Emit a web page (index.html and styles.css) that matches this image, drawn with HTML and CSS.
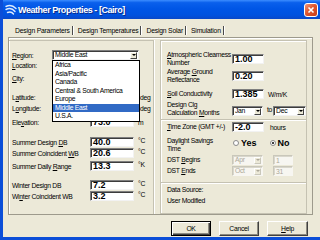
FILE: index.html
```html
<!DOCTYPE html>
<html lang="en">
<head>
<meta charset="utf-8">
<title>Weather Properties - [Cairo]</title>
<link rel="stylesheet" href="styles.css">
</head>
<body>
<div class="window">
  <div class="titlebar">
    <svg class="app-icon" viewBox="0 0 12 11" aria-hidden="true">
      <path d="M1 2.5 C4 1 8 1.5 11 4.5"/>
      <path d="M1 5.5 C4 4 7.5 4.5 10 7.5"/>
      <path d="M2.5 8.5 C5 7.5 7 8 8.5 10"/>
    </svg>
    <span class="title">Weather Properties - [Cairo]</span>
    <span class="close"><svg viewBox="0 0 8 8" aria-hidden="true"><path d="M1.5 1.5 L6.5 6.5 M6.5 1.5 L1.5 6.5"/></svg></span>
  </div>
  <div class="client">
    <div class="tabs">
      <span class="tab">Design Parameters</span>
      <span class="tab">Design Temperatures</span>
      <span class="tab">Design Solar</span>
      <span class="tab">Simulation</span>
    </div>
    <div class="panel">
      <div class="leftcol">
        <div class="row">
          <span class="lbl lbl-short"><u>R</u>egion:</span>
          <div class="combo combo-region">
            <span class="combo-text">Middle East</span>
            <span class="drop"><span class="tri"></span></span>
            <ul class="droplist">
              <li>Africa</li>
              <li>Asia/Pacific</li>
              <li>Canada</li>
              <li>Central &amp; South America</li>
              <li>Europe</li>
              <li class="sel">Middle East</li>
              <li>U.S.A.</li>
            </ul>
          </div>
        </div>
        <div class="row">
          <span class="lbl lbl-short"><u>L</u>ocation:</span>
          <div class="field field-wide"></div>
        </div>
        <div class="row sp3">
          <span class="lbl lbl-short"><u>C</u>ity:</span>
          <div class="field field-wide"></div>
        </div>
        <div class="row sp9">
          <span class="lbl">L<u>a</u>titude:</span>
          <div class="field"></div>
          <span class="unit unit-deg">deg</span>
        </div>
        <div class="row sp1">
          <span class="lbl">L<u>o</u>ngitude:</span>
          <div class="field"></div>
          <span class="unit unit-deg">deg</span>
        </div>
        <div class="row sp4">
          <span class="lbl">Ele<u>v</u>ation:</span>
          <div class="field">73.0</div>
          <span class="unit">m</span>
        </div>
        <div class="row sp10">
          <span class="lbl">Summer Design <u>D</u>B</span>
          <div class="field">40.0</div>
          <span class="unit unit-top">°C</span>
        </div>
        <div class="row sp1">
          <span class="lbl">Summer Coincident <u>W</u>B</span>
          <div class="field">20.6</div>
          <span class="unit unit-top">°C</span>
        </div>
        <div class="row sp3">
          <span class="lbl">Summer Daily <u>R</u>ange</span>
          <div class="field">13.3</div>
          <span class="unit unit-top">°K</span>
        </div>
        <div class="row sp9">
          <span class="lbl">Winter Design DB</span>
          <div class="field">7.2</div>
          <span class="unit unit-top">°C</span>
        </div>
        <div class="row sp1">
          <span class="lbl">Wi<u>n</u>ter Coincident WB</span>
          <div class="field">3.2</div>
          <span class="unit unit-top">°C</span>
        </div>
      </div>
      <div class="rightcol">
        <div class="group group-a">
          <div class="rrow rrow-tall">
            <span class="rlbl"><u>A</u>tmospheric Clearness<br>Number</span>
            <div class="field rfield">1.00</div>
          </div>
          <div class="rrow rrow-tall sp1">
            <span class="rlbl">Average <u>G</u>round<br>Reflectance</span>
            <div class="field rfield">0.20</div>
          </div>
          <div class="rrow sp5">
            <span class="rlbl"><u>S</u>oil Conductivity</span>
            <div class="field rfield">1.385</div>
            <span class="unit">W/m/K</span>
          </div>
          <div class="rrow rrow-tall sp2">
            <span class="rlbl">Design Clg<br>Calculation <u>M</u>onths</span>
            <div class="combo combo-small combo-push">
              <span class="combo-text">Jan</span>
              <span class="drop"><span class="tri"></span></span>
            </div>
            <span class="unit unit-to">to</span>
            <div class="combo combo-small combo-dec">
              <span class="combo-text">Dec</span>
              <span class="drop"><span class="tri"></span></span>
            </div>
          </div>
        </div>
        <div class="group group-b">
          <div class="rrow">
            <span class="rlbl"><u>T</u>ime Zone (GMT +/-)</span>
            <div class="field rfield">-2.0</div>
            <span class="unit unit-hours">hours</span>
          </div>
          <div class="rrow rrow-tall rrow-top sp5">
            <span class="rlbl">Daylight Savings<br>Time</span>
            <label class="radio"><span class="dot"></span>Yes</label>
            <label class="radio radio-no"><span class="dot on"></span>No</label>
          </div>
          <div class="rrow sp2">
            <span class="rlbl">DST <u>B</u>egins</span>
            <div class="combo combo-small combo-off">
              <span class="combo-text">Apr</span>
              <span class="drop"><span class="tri"></span></span>
            </div>
            <div class="field field-off">1</div>
          </div>
          <div class="rrow sp1">
            <span class="rlbl">DST <u>E</u>nds</span>
            <div class="combo combo-small combo-off">
              <span class="combo-text">Oct</span>
              <span class="drop"><span class="tri"></span></span>
            </div>
            <div class="field field-off">31</div>
          </div>
        </div>
        <div class="group group-c">
          <div class="src">Data Source:</div>
          <div class="src">User Modified</div>
        </div>
      </div>
    </div>
    <div class="buttons">
      <button class="btn btn-default" type="button">OK</button>
      <button class="btn" type="button">Cancel</button>
      <button class="btn btn-help" type="button"><u>H</u>elp</button>
    </div>
  </div>
</div>
</body>
</html>
```

FILE: styles.css
```css
* { box-sizing: border-box; }
html, body { margin: 0; padding: 0; }
body {
  width: 320px;
  height: 240px;
  overflow: hidden;
  background: #ECE9D8;
  color: #000;
  font-family: "Liberation Sans", Arial, sans-serif;
  font-size: 6.8px;
  letter-spacing: -0.3px;
}
.window {
  width: 320px;
  height: 240px;
  display: flex;
  flex-direction: column;
  background: #ECE9D8;
  border-left: 3px solid #0B4ED8;
  border-bottom: 3px solid #0B4ED8;
}
.titlebar {
  flex: none;
  height: 19px;
  display: flex;
  align-items: center;
  padding: 0 2px 0 2px;
  color: #fff;
  background: linear-gradient(#3C8DFF 0%, #0A60EC 14%, #0056E6 45%, #0052DF 80%, #0A48C8 100%);
}
.app-icon { width: 12px; height: 11px; flex: none; }
.app-icon path { fill: none; stroke: #DCEBFF; stroke-width: 1.4; stroke-linecap: round; }
.title {
  flex: 1;
  margin-left: 1px;
  font-weight: bold;
  font-size: 9px;
  letter-spacing: -0.45px;
  white-space: nowrap;
  text-shadow: 1px 1px 0 #0A2A8A;
}
.close {
  flex: none;
  width: 14px;
  height: 14px;
  border: 1px solid #fff;
  border-radius: 3px;
  background: linear-gradient(135deg, #F2967A 0%, #E0582F 45%, #C83C18 100%);
  display: flex;
  align-items: center;
  justify-content: center;
}
.close svg { width: 8px; height: 8px; }
.close path { stroke: #fff; stroke-width: 1.6; fill: none; }

.client {
  flex: 1;
  display: flex;
  flex-direction: column;
  padding: 0 7px 0 5px;
}
.tabs {
  flex: none;
  height: 18px;
  display: flex;
  align-items: center;
  padding: 4px 0 0 4px;
}
.tab {
  padding: 0 2px 0 3px;
  margin-right: 2px;
  line-height: 9px;
  letter-spacing: -0.2px;
  white-space: nowrap;
  border-right: 1px solid #4A4A4A;
  box-shadow: 1px 0 0 #fff;
}
.panel {
  flex: none;
  height: 178px;
  display: flex;
  gap: 6px;
  padding: 2px 5px 0 0;
  border: 1px solid #9D9A8C;
  box-shadow: inset 1px 1px 0 #fff;
}
.leftcol {
  width: 145px;
  flex: none;
  padding: 9px 0 0 3px;
  border-top: 1px solid #C5C2B2;
  border-right: 1px solid #C5C2B2;
  box-shadow: 1px 0 0 #fff;
}
.row {
  display: flex;
  align-items: center;
  height: 10px;
}
.sp1 { margin-top: 1px; }
.sp2 { margin-top: 2px; }
.sp3 { margin-top: 3px; }
.sp4 { margin-top: 4px; }
.sp5 { margin-top: 5px; }
.sp9 { margin-top: 9px; }
.sp10 { margin-top: 10px; }
.lbl { width: 78px; flex: none; white-space: nowrap; }
.lbl-short { width: 40px; }
.field {
  flex: none;
  width: 44px;
  height: 10px;
  background: #fff;
  border-style: solid;
  border-width: 1px;
  border-color: #7E7E7E #F2F2F2 #F2F2F2 #7E7E7E;
  box-shadow: inset 1px 1px 0 #3C3C3C;
  padding-left: 2px;
  font-family: "Liberation Sans", Arial, sans-serif;
  font-weight: bold;
  font-size: 9px;
  letter-spacing: 0;
  line-height: 9px;
  white-space: nowrap;
  overflow: hidden;
}
.field-wide { width: 87px; }
.unit { margin-left: 4px; white-space: nowrap; }
.unit-deg { margin-left: 6px; }
.unit-top { align-self: flex-start; line-height: 7px; }
.combo {
  position: relative;
  flex: none;
  height: 10px;
  display: flex;
  align-items: center;
  background: #fff;
  border-style: solid;
  border-width: 1px;
  border-color: #7E7E7E #F2F2F2 #F2F2F2 #7E7E7E;
  box-shadow: inset 1px 1px 0 #3C3C3C;
  padding: 0 1px 0 2px;
}
.combo-region { width: 87px; }
.combo-text { flex: 1; white-space: nowrap; line-height: 8px; }
.drop {
  flex: none;
  width: 7px;
  height: 7px;
  background: #ECE9D8;
  border-style: solid;
  border-width: 1px;
  border-color: #fff #404040 #404040 #fff;
  display: flex;
  align-items: center;
  justify-content: center;
}
.tri {
  width: 0;
  height: 0;
  border-left: 2px solid transparent;
  border-right: 2px solid transparent;
  border-top: 2px solid #000;
}
.droplist {
  position: absolute;
  z-index: 5;
  top: 9px;
  left: -1px;
  width: 88px;
  margin: 0;
  padding: 0;
  list-style: none;
  background: #fff;
  border: 1px solid #000;
}
.droplist li {
  height: 8.5px;
  line-height: 8.5px;
  padding-left: 2px;
  white-space: nowrap;
}
.droplist li.sel { background: #316AC5; color: #fff; }

.rightcol {
  width: 147px;
  flex: none;
  display: flex;
  flex-direction: column;
}
.group {
  flex: none;
  border: 1px solid #C5C2B2;
  box-shadow: inset 1px 1px 0 #fff;
  padding-left: 6px;
}
.group-a { height: 80px; padding-top: 10px; }
.group-b { height: 63px; padding-top: 2px; border-top: none; }
.group-c { height: 31px; padding-top: 1px; border-top: none; }
.rrow { display: flex; align-items: center; height: 10px; }
.rrow-tall { height: 16px; }
.rrow-top { align-items: flex-start; }
.rlbl { width: 65px; flex: none; line-height: 8px; white-space: nowrap; }
.rfield { width: 32px; }
.combo-small { width: 31px; }
.combo-dec { width: 33px; }
.combo-push { margin-top: 4px; }
.combo-dec { margin-top: 4px; }
.unit-to { margin-left: 4px; margin-right: 1px; margin-top: 1px; }
.unit-hours { margin-left: 6px; }
.combo-off {
  background: #F7F6F1;
  border-color: #C9C7BA #F7F6F1 #F7F6F1 #C9C7BA;
  box-shadow: inset 1px 1px 0 #D9D7CC;
  color: #ACA899;
}
.combo-off .drop { border-color: #fff #C9C7BA #C9C7BA #fff; }
.combo-off .tri { border-top-color: #ACA899; }
.field-off {
  width: 20px;
  margin-left: 10px;
  background: #F7F6F1;
  border-color: #C9C7BA #F7F6F1 #F7F6F1 #C9C7BA;
  box-shadow: inset 1px 1px 0 #D9D7CC;
  color: #ACA899;
  font-weight: normal;
  font-size: 6.8px;
  letter-spacing: -0.3px;
}
.radio {
  display: flex;
  align-items: center;
  height: 10px;
  margin-top: 1px;
  margin-left: 1px;
  font-family: "Liberation Sans", Arial, sans-serif;
  font-weight: bold;
  font-size: 9px;
  letter-spacing: 0;
}
.radio-no { margin-left: 13px; }
.dot {
  width: 6px;
  height: 6px;
  margin-right: 2px;
  border-radius: 50%;
  background: #fff;
  border: 1px solid #8A8A8A;
  display: flex;
  align-items: center;
  justify-content: center;
}
.dot.on::after {
  content: "";
  width: 2px;
  height: 2px;
  border-radius: 50%;
  background: #000;
}
.src { line-height: 11px; white-space: nowrap; }

.buttons {
  flex: none;
  display: flex;
  justify-content: flex-end;
  gap: 8px;
  margin-top: 6px;
  padding-right: 5px;
}
.btn {
  width: 40px;
  height: 15px;
  padding: 0;
  margin: 0;
  font: inherit;
  letter-spacing: inherit;
  color: #000;
  background: #ECE9D8;
  border-style: solid;
  border-width: 1px;
  border-color: #fff #404040 #404040 #fff;
  box-shadow: inset -1px -1px 0 #8C8A80;
}
.btn-default {
  border: 1px solid #000;
  box-shadow: inset 1px 1px 0 #fff, inset -1px -1px 0 #404040, inset -2px -2px 0 #8C8A80;
}
.btn-help { width: 41px; }
```
